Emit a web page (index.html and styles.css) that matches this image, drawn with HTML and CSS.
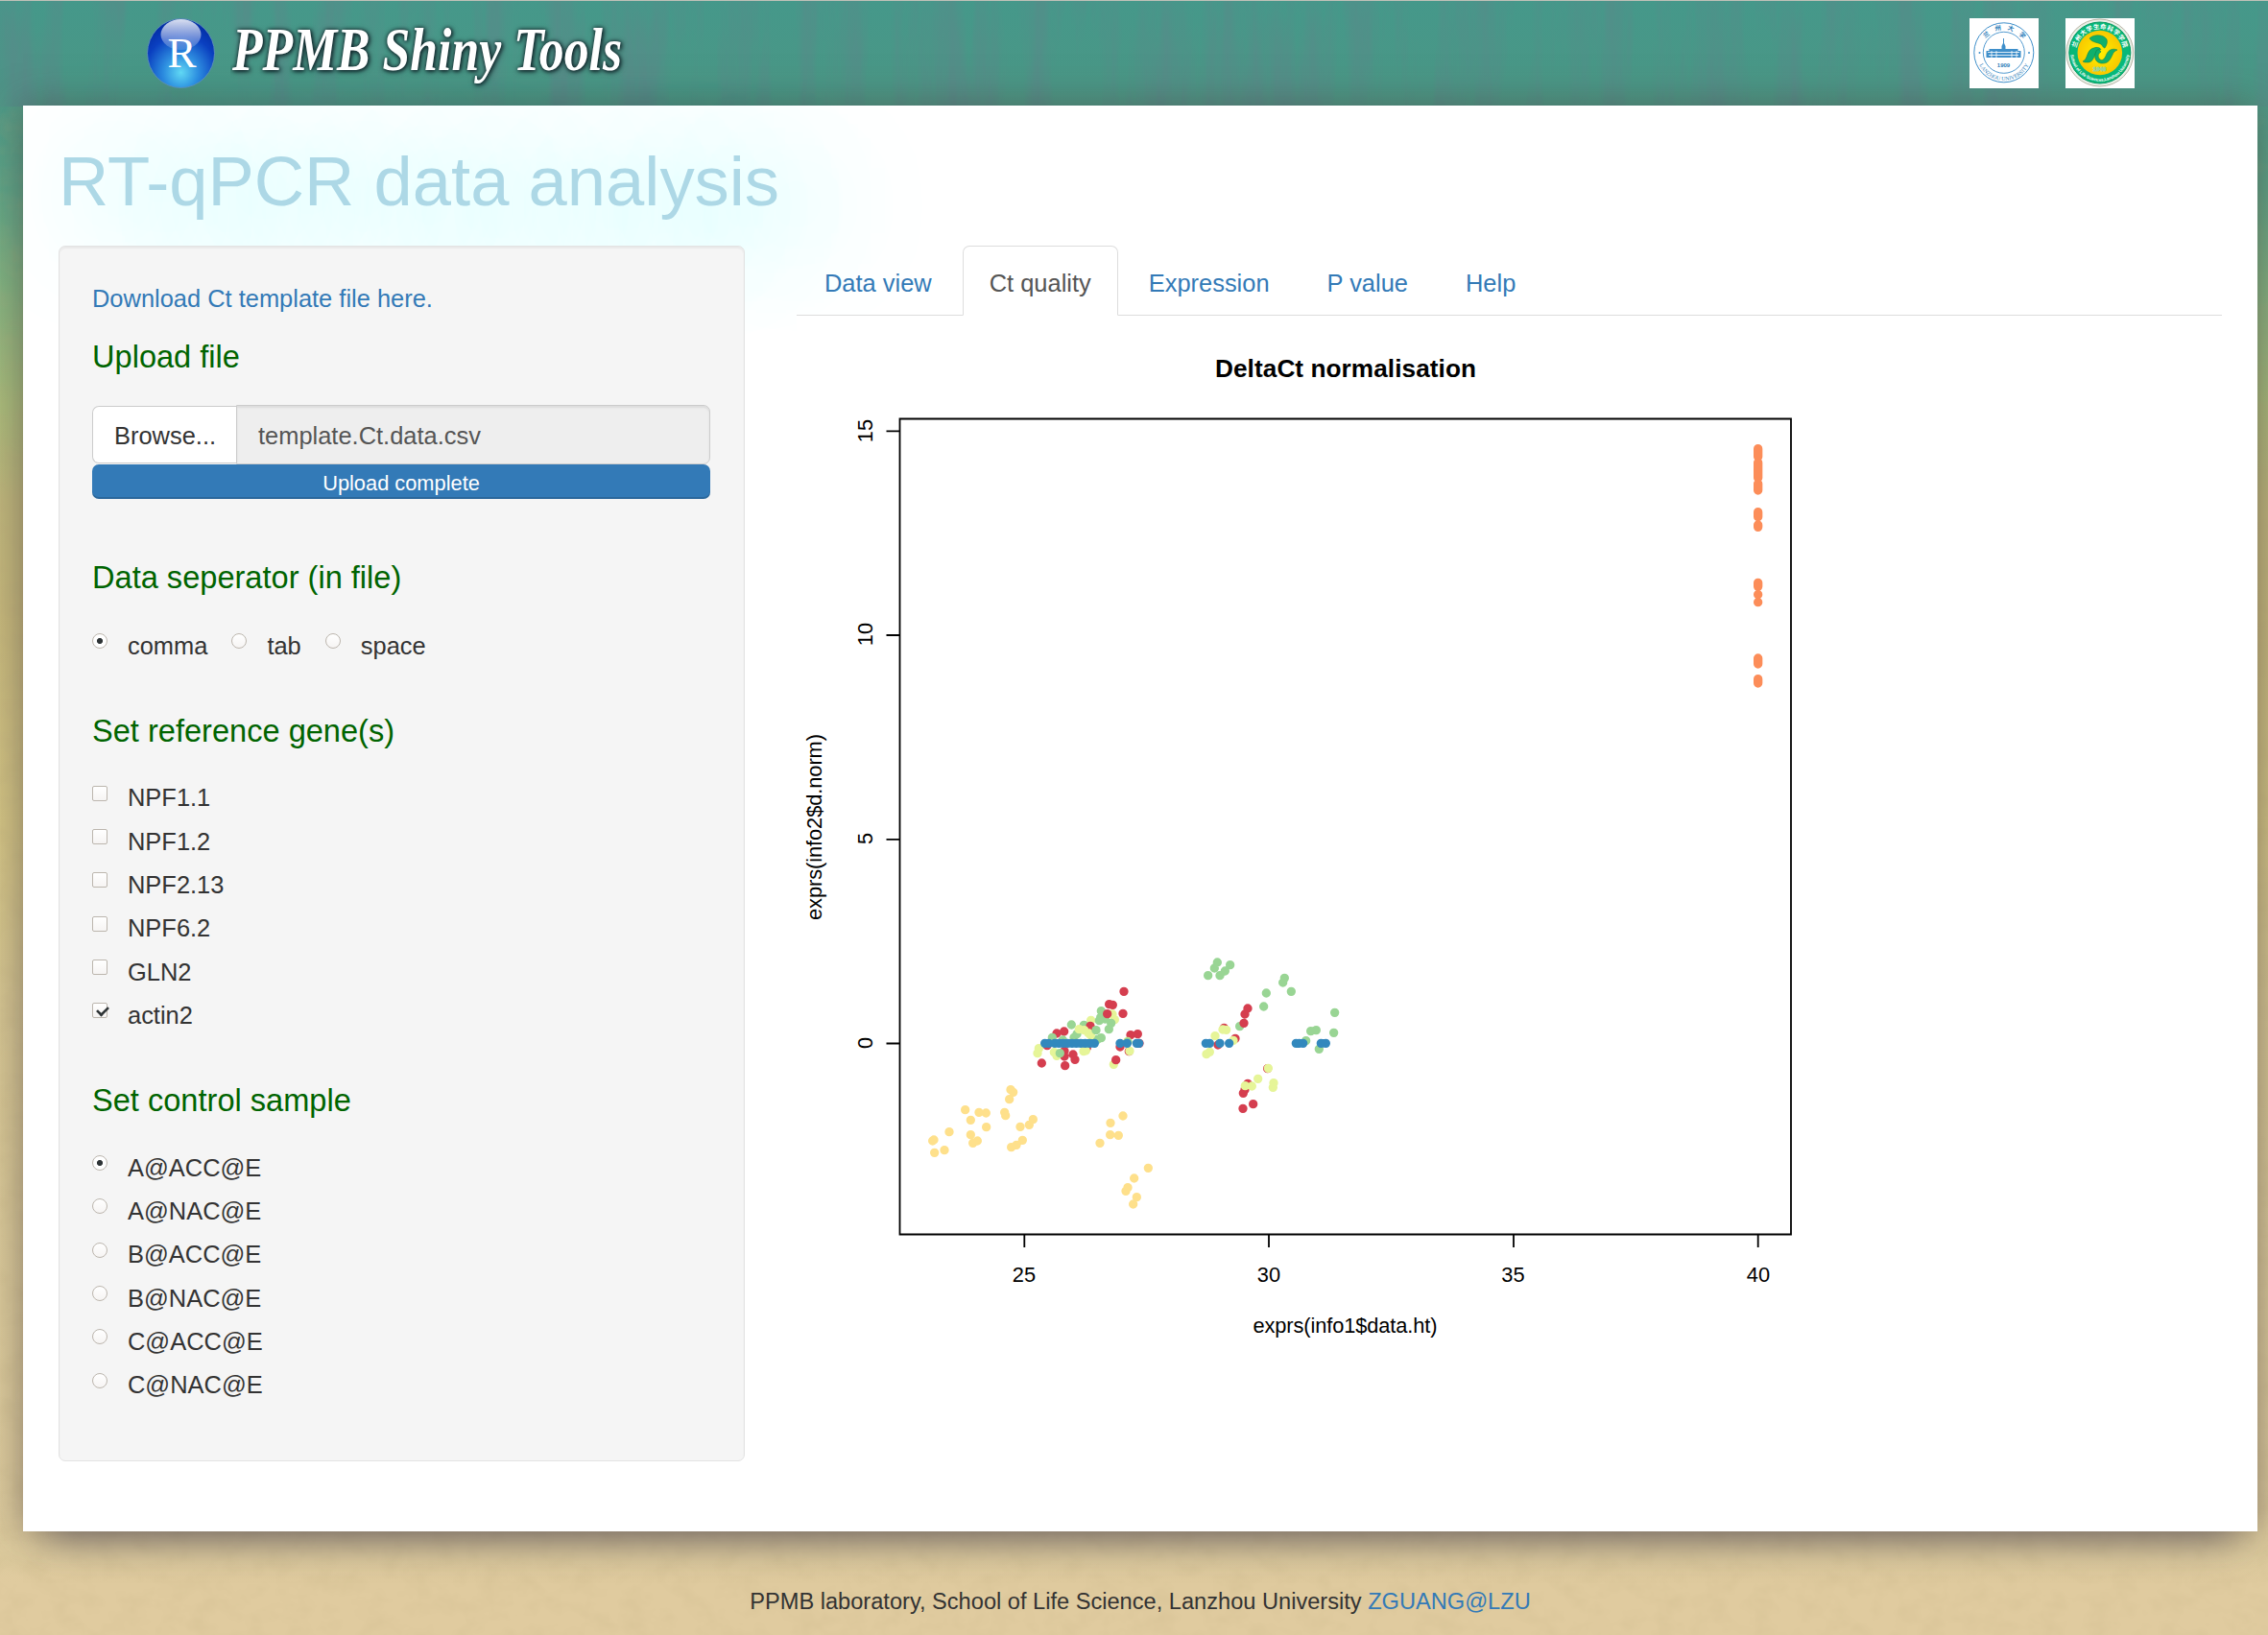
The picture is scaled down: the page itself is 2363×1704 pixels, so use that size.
FILE: index.html
```
<!DOCTYPE html>
<html lang="en">
<head>
<meta charset="utf-8">
<title>PPMB Shiny Tools</title>
<link rel="stylesheet" href="styles.css">
</head>
<body>
<svg class="grain" width="2363" height="1704" aria-hidden="true">
  <filter id="wood" x="0" y="0" width="100%" height="100%">
    <feTurbulence type="fractalNoise" baseFrequency="0.03 0.003" numOctaves="5" seed="8"/>
    <feColorMatrix values="0 0 0 0 0.1  0 0 0 0 0.25  0 0 0 0 0.25  2 0 0 0 -0.85"/>
  </filter>
  <filter id="sand" x="0" y="0" width="100%" height="100%">
    <feTurbulence type="fractalNoise" baseFrequency="0.04 0.05" numOctaves="3" seed="3"/>
    <feColorMatrix values="0 0 0 0 0.5  0 0 0 0 0.4  0 0 0 0 0.2  0.3 0 0 0 -0.12"/>
  </filter>
  <rect width="2363" height="110" filter="url(#wood)"/>
  <rect y="110" width="2363" height="1594" filter="url(#sand)"/>
</svg>
<header class="header">
  <div class="brand">
    <svg width="71" height="73" viewBox="0 0 71 73">
      <defs>
        <radialGradient id="orb" cx=".5" cy=".78" r=".72"><stop offset="0" stop-color="#62d8f4"/><stop offset=".35" stop-color="#2f8fe0"/><stop offset=".75" stop-color="#0a3fc0"/><stop offset="1" stop-color="#0430a8"/></radialGradient>
        <linearGradient id="gloss" x2="0" y2="1"><stop offset="0" stop-color="#fff" stop-opacity=".85"/><stop offset="1" stop-color="#fff" stop-opacity=".12"/></linearGradient>
      </defs>
      <ellipse cx="35.5" cy="36.5" rx="35" ry="36" fill="url(#orb)" stroke="#5b8fb5"/>
      <ellipse cx="35.5" cy="17" rx="21" ry="16" fill="url(#gloss)"/>
      <text class="orb-letter" x="36.5" y="51" text-anchor="middle">R</text>
    </svg>
    <svg width="430" height="90" viewBox="0 0 430 90">
      <text class="brand-name" x="2" y="54" textLength="406" lengthAdjust="spacingAndGlyphs">PPMB Shiny Tools</text>
    </svg>
  </div>
  <div class="seals">
    <svg width="72" height="73" viewBox="0 0 72 73">
      <defs><path id="s1b" d="M7.600 36.500a28.400 28.400 0 0 0 56.800 0"/><path id="s1t" d="M12 36a24 24 0 0 1 48 0"/></defs>
      <rect width="72" height="73" fill="#fff"/>
      <g fill="none" stroke="#3f8fca"><circle cx="35.8" cy="35.8" r="31"/><circle cx="35.8" cy="35.8" r="21.5" stroke-width=".9"/></g>
      <g fill="#3f8fca">
        <path d="M35 21h1v5l1.500 3v3h13v2h3v7h-36v-7h3v-2h13v-3l1.500-3z"/>
        <circle cx="10.500" cy="36" r="1"/><circle cx="62" cy="36" r="1"/>
      </g>
      <path d="M19 35.500h33M20 38.500h31M23 34v7M28 34v7M44 34v7M49 34v7" stroke="#fff" stroke-width=".8"/>
      <text class="seal-year" x="35.500" y="50.500" text-anchor="middle">1909</text>
      <text class="seal-cn"><textPath href="#s1t" startOffset="54%" text-anchor="middle">兰州大学</textPath></text>
      <text class="seal-en"><textPath href="#s1b" startOffset="50%" text-anchor="middle">LANZHOU UNIVERSITY</textPath></text>
    </svg>
    <svg width="72" height="73" viewBox="0 0 72 73">
      <defs><path id="s2b" d="M5.200 35a30.700 30.700 0 0 0 61.400 0"/><path id="s2t" d="M10.800 36a25 25 0 0 1 50 0"/>
      <radialGradient id="sun"><stop offset="0" stop-color="#fff000"/><stop offset="1" stop-color="#f8c800"/></radialGradient></defs>
      <rect width="72" height="73" fill="#fff"/>
      <circle cx="35.800" cy="36" r="35" fill="#e9efe6" stroke="#b9b5a6"/>
      <circle cx="35.800" cy="36" r="32" fill="#08b878" stroke="#079a63" stroke-width="1"/>
      <circle cx="35.800" cy="36" r="23.300" fill="url(#sun)"/>
      <g fill="#10b06c" stroke="#067d48" stroke-width=".5">
        <path d="M25 21c5-5 15-4 18 1 1 3 0 6-2 9-1 0-2-1-3-3-3-3-10-2-13-7z"/>
        <path d="M18 45c6-2 3-13 13-14.500 3-.5 5 .5 6 2-7 0-6 13-13 13.500-3 0-5 0-6-1z"/>
        <path d="M33 33c-4 5-3 13 4 14 8 1 10-5 12-9 1-3 3-4 5-5-5-2-9 0-11 4-2 5-4 8-7 6-3-3-2-6 1-8-1-2-3-3-4-2z"/>
      </g>
      <text class="seal-year green" x="35.500" y="54.500" text-anchor="middle">1946</text>
      <text class="seal-cn white"><textPath href="#s2t" startOffset="50%" text-anchor="middle" textLength="68">兰州大学生命科学学院</textPath></text>
      <text class="seal-en white"><textPath href="#s2b" startOffset="50%" text-anchor="middle" textLength="90">School of Life Sciences,Lanzhou University</textPath></text>
    </svg>
  </div>
</header>

<main class="page">
  <h2 class="title">RT-qPCR data analysis</h2>
  <div class="columns">
    <form class="well">
      <p class="download"><a href="#">Download Ct template file here.</a></p>
      <h4 class="first">Upload file</h4>
      <div class="file"><span class="browse">Browse...</span><span class="filename">template.Ct.data.csv</span></div>
      <div class="progress">Upload complete</div>
      <h4 class="sep">Data seperator (in file)</h4>
      <div class="inline">
        <label><input type="radio" name="sep" checked>comma</label>
        <label><input type="radio" name="sep">tab</label>
        <label><input type="radio" name="sep">space</label>
      </div>
      <h4>Set reference gene(s)</h4>
      <div class="list">
        <label><input type="checkbox">NPF1.1</label>
        <label><input type="checkbox">NPF1.2</label>
        <label><input type="checkbox">NPF2.13</label>
        <label><input type="checkbox">NPF6.2</label>
        <label><input type="checkbox">GLN2</label>
        <label><input type="checkbox" checked>actin2</label>
      </div>
      <h4>Set control sample</h4>
      <div class="list">
        <label><input type="radio" name="ctl" checked>A@ACC@E</label>
        <label><input type="radio" name="ctl">A@NAC@E</label>
        <label><input type="radio" name="ctl">B@ACC@E</label>
        <label><input type="radio" name="ctl">B@NAC@E</label>
        <label><input type="radio" name="ctl">C@ACC@E</label>
        <label><input type="radio" name="ctl">C@NAC@E</label>
      </div>
    </form>
    <section class="results">
      <nav class="tabs">
        <a href="#">Data view</a><a href="#" class="active">Ct quality</a><a href="#">Expression</a><a href="#">P value</a><a href="#">Help</a>
      </nav>
      <svg class="plot" width="1080" height="1100" viewBox="830 329 1080 1100">
        <text class="plot-title" x="1266" y="392.500" textLength="272">DeltaCt normalisation</text>
        <path class="axis" d="M937.500 436.500H1866V1286.500H937.500zM937.500 449.300h-14M937.500 662h-14M937.500 874.800h-14M937.500 1087.500h-14M1067.300 1287v13M1322 1287v13M1577 1287v13M1831.700 1287v13"/>
        <g class="labels">
          <text x="1067" y="1336">25</text><text x="1322" y="1336">30</text><text x="1576.500" y="1336">35</text><text x="1832" y="1336">40</text>
          <text x="1401.500" y="1389" textLength="192">exprs(info1$data.ht)</text>
          <text transform="translate(908.700 449)rotate(-90)">15</text>
          <text transform="translate(908.700 661)rotate(-90)">10</text>
          <text transform="translate(908.700 874)rotate(-90)">5</text>
          <text transform="translate(908.700 1087)rotate(-90)">0</text>
          <text transform="translate(855.700 862)rotate(-90)" textLength="194">exprs(info2$d.norm)</text>
        </g>
        <g class="points">
          <path class="yellow" transform="translate(950 1120)scale(.33333)" d="M309 47h0M317 55h0M305 77h0M167 110h0M210 118h0M232 120h0M290 118h0M293 128h0M184 142h0M233 164h0M379 140h0M367 157h0M339 163h0M117 179h0M184 188h0M69 204h0M65 207h0M71 244h0M102 236h0M191 214h0M205 207h0M346 205h0M327 220h0M311 227h0M660 129h0M621 151h0M620 188h0M646 190h0M588 214h0M739 292h0M695 324h0M675 353h0M669 364h0M703 383h0M692 405h0"/>
          <g transform="translate(1060 1000)scale(.33333)">
            <path class="red" d="M333 100h0M287 140h0M298 142h0M330 169h0M123 231h0M146 225h0M354 236h0M376 233h0M381 262h0M93 269h0M76 324h0M147 286h0M147 303h0M174 297h0M180 313h0M149 332h0M217 276h0M321 273h0M349 287h0"/>
            <path class="lime" d="M297 171h0M304 188h0M230 190h0M67 278h0M63 293h0M115 290h0M123 301h0M214 285h0M207 287h0M301 328h0M351 286h0M344 256h0"/>
            <path class="green" d="M262 161h0M260 181h0M256 191h0M274 186h0M293 199h0M286 218h0M208 205h0M169 204h0M186 233h0M177 244h0M109 244h0M142 252h0M133 293h0M262 245h0M250 250h0M345 258h0"/>
            <path class="red" d="M281 170h0M228 208h0M308 314h0"/>
            <path class="lime" d="M193 218h0M209 221h0M222 230h0M229 237h0"/>
            <path class="green" d="M246 221h0"/>
            <path class="blue" d="M86 262h0M98 262h0M117 262h0M130 262h0M143 262h0M157 262h0M171 262h0M184 262h0M198 262h0M212 262h0M226 262h0M241 262h0M321 262h0M343 262h0M373 262h0M380 262h0"/>
          </g>
          <g transform="translate(1220 980)scale(.33333)">
            <path class="green" d="M145 69h0M185 77h0M136 87h0M169 96h0M116 110h0M153 110h0M355 118h0M350 132h0M376 160h0M298 165h0M290 207h0M215 269h0M512 226h0M509 289h0M454 281h0M437 284h0M422 314h0M463 340h0"/>
            <path class="red" d="M240 213h0M231 231h0M228 259h0M166 274h0M201 307h0M147 327h0M302 401h0M240 448h0M231 467h0M226 478h0M257 512h0M225 526h0"/>
            <path class="lime" d="M162 279h0M173 280h0M138 299h0M195 313h0M121 349h0M111 356h0M304 400h0M272 433h0M253 456h0M232 455h0M321 446h0M319 460h0"/>
            <path class="blue" d="M109 322h0M121 322h0M153 322h0M182 322h0M391 322h0M401 322h0M413 322h0M469 322h0M484 322h0"/>
          </g>
          <path class="orange" transform="translate(1780 420)scale(.33333)" d="M155 143V168M155 186V234M155 252V273M155 341V356M155 381V388M155 562V574M155 599h0M155 623h0M155 798V816M155 863V876"/>
        </g>
      </svg>
    </section>
  </div>
</main>
<footer class="footer">PPMB laboratory, School of Life Science, Lanzhou University <a href="#">ZGUANG@LZU</a></footer>
</body>
</html>
```
FILE: styles.css
```
* { box-sizing: border-box; }
html { height: 1704px; }
body {
  margin: 0;
  height: 1704px;
  overflow: hidden;
  border-top: 1px solid #bfc1b8;
  font: 25.45px/36.36px "Liberation Sans", Arial, sans-serif;
  color: #333;
  background: linear-gradient(#45988a 0, #4a9786 90px, #5fa485 200px, #83b280 300px, #a9bb7b 420px, #bfb67c 520px, #c6b87c 640px, #d2c384 860px, #d5c592 1050px, #dac99a 1350px, #dcca9d 1620px, #e0cb9f 1650px);
}
a { color: #337ab7; text-decoration: none; }
.grain { position: absolute; left: 0; top: 1px; z-index: -1; }

.header {
  height: 109px;
  padding: 18px 139px 0 153px;
  display: flex;
  justify-content: space-between;
}
.header svg { display: block; }
.brand { display: flex; gap: 16px; }
.orb-letter { font: 45px "Liberation Serif", serif; fill: #fff; }
.brand-name {
  font: italic bold 64px "Liberation Serif", serif;
  fill: #fff;
  filter: drop-shadow(1px 1px 2px #10252a) drop-shadow(0 0 2px #1f3a3c);
}
.seals { display: flex; gap: 28px; }
.seal-year { font: bold 6px "Liberation Sans", sans-serif; fill: #2c7cb8; }
.seal-year.green { fill: #7a9a20; }
.seal-cn { font: bold 6.5px "Noto Sans CJK SC", sans-serif; fill: #2c7cb8; letter-spacing: 6px; }
.seal-cn.white { fill: #fff; letter-spacing: 0; }
.seal-en { font: 5.8px "Liberation Serif", serif; fill: #2c7cb8; }
.seal-en.white { font: bold 4.5px "Liberation Sans", sans-serif; fill: #fff; }

.page {
  width: 2328px;
  height: 1486px;
  margin-left: 24px;
  padding: 38px 37px 0;
  background: #fff;
  box-shadow: 0 38px 34px -28px rgba(80, 72, 85, .5), 0 0 36px rgba(70, 60, 60, .5);
}
.title {
  margin: 0;
  height: 108px;
  font-size: 72.4px;
  font-weight: 400;
  line-height: 81px;
  color: #add8e6;
  text-shadow: 36px 18px 120px rgba(0, 255, 255, .75);
}
.columns { display: flex; gap: 54px; position: relative; }
.well {
  width: 715px;
  height: 1267px;
  padding: 36px 35px 0 34px;
  background: #f5f5f5;
  border: 1px solid #e3e3e3;
  border-radius: 7px;
  box-shadow: inset 0 2px 2px rgba(0, 0, 0, .05);
}
.download { margin: 0; }
h4 {
  margin: 53px 0 33.2px;
  font-size: 32.6px;
  line-height: 36px;
  font-weight: 400;
  color: #006400;
}
h4.first { margin: 25px 0 31.6px; }
h4.sep { margin: 64.4px 0 34.3px; }
.file { display: flex; height: 62px; align-items: center; }
.browse {
  height: 60px;
  width: 150px;
  padding-left: 22px;
  line-height: 61px;
  background: #fff;
  border: 1px solid #ccc;
  border-right: 0;
  border-radius: 7px 0 0 7px;
}
.filename {
  flex: 1;
  height: 62px;
  padding-left: 22px;
  line-height: 63px;
  color: #555;
  background: #eee;
  border: 1px solid #ccc;
  border-radius: 0 7px 7px 0;
  box-shadow: inset 0 2px 2px rgba(0, 0, 0, .075);
}
.progress {
  height: 36px;
  font-size: 21.82px;
  line-height: 39px;
  text-align: center;
  color: #fff;
  background: #337ab7;
  border-radius: 7px;
  box-shadow: inset 0 -2px 0 rgba(0, 0, 0, .15);
}
label { display: flex; height: 36.36px; gap: 21px; }
.inline { display: flex; gap: 25px; }
.list { display: flex; flex-direction: column; gap: 9px; }
input {
  appearance: none;
  width: 16px;
  height: 16px;
  margin: 5.5px 0 0;
  border: 1px solid #bcb6ae;
  border-radius: 2px;
  background: linear-gradient(#fff, #f6f4f3);
}
input[type=radio] { border-radius: 50%; }
input[type=radio]:checked { background: radial-gradient(circle, #2e3436 2.7px, #fff 3.4px); }
input[type=checkbox]:checked::after {
  content: "";
  display: block;
  width: 11px;
  height: 6px;
  margin: 2px 0 0 3px;
  border: solid #2e3436;
  border-width: 0 0 3px 3px;
  transform: rotate(-45deg) scale(.85);
}

.results { width: 1485px; }
.tabs {
  display: flex;
  gap: 4px;
  height: 73px;
  border-bottom: 1px solid #ddd;
}
.tabs a {
  height: 73px;
  padding: 20px 27px 0 28px;
  border: 1px solid transparent;
  border-radius: 7px 7px 0 0;
}
.tabs a + a { padding-left: 27px; }
.tabs .active { color: #555; background: #fff; border-color: #ddd #ddd #fff; }
.plot { display: block; background: #fff; }
.plot-title { font-size: 26.2px; font-weight: 700; fill: #000; }
.labels { font-size: 21.82px; text-anchor: middle; fill: #000; }
.axis { fill: none; stroke: #000; stroke-width: 1.8; }
.points { fill: none; stroke-width: 28; stroke-linecap: round; }
.yellow { stroke: #fee08b; }
.red { stroke: #d53e4f; }
.lime { stroke: #e6f598; }
.green { stroke: #99d594; }
.blue { stroke: #3288bd; }
.orange { stroke: #fc8d59; }

.footer { padding-top: 55px; width: 2376px; text-align: center; font-size: 23.62px; }
```
